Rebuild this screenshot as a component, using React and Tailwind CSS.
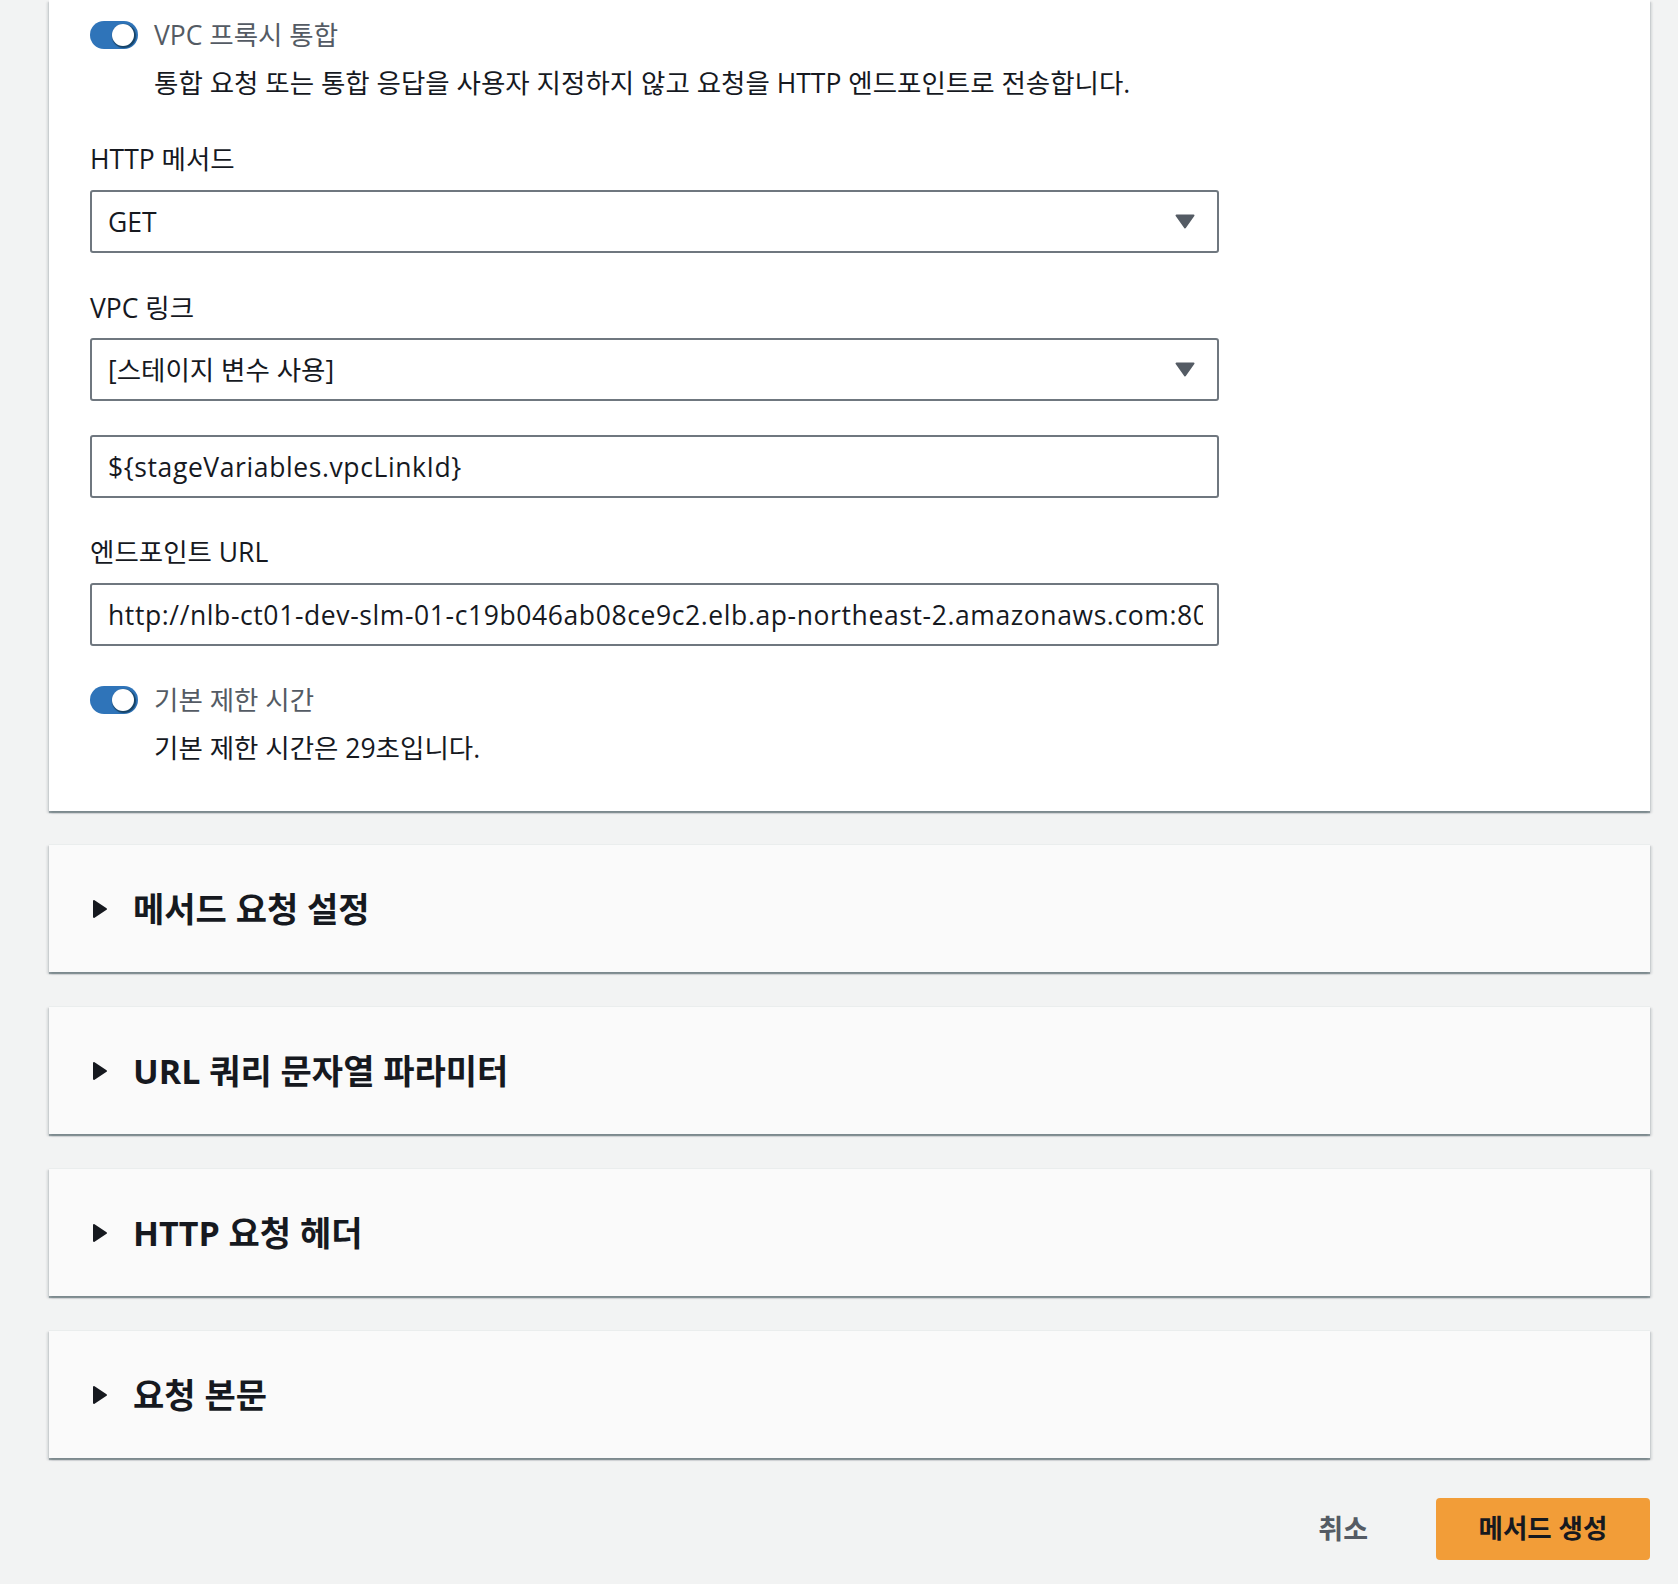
const font = { fontFamily: '"Open Sans", "Noto Sans CJK KR", sans-serif' };

function Toggle({ label, description }) {
  return (
    <div>
      <div className="flex items-center h-[32px]">
        <span className="relative inline-block w-[48px] h-[28px] rounded-full bg-[#2f74b9]">
          <span className="absolute right-[4px] top-[3px] w-[22px] h-[22px] rounded-full bg-white shadow-[1px_1px_1px_1px_rgba(0,28,36,0.55)]" />
        </span>
        <span className="ml-[16px] text-[26.5px] leading-[32px] text-[#545b64]">{label}</span>
      </div>
      <p className="mt-[14px] pl-[64px] text-[26.5px] leading-[36px] text-[#16191f]">{description}</p>
    </div>
  );
}

function Caret() {
  return (
    <svg width="20" height="15" viewBox="0 0 20 15" className="shrink-0">
      <path d="M1.5 1.5 H18.5 L10 13.5 Z" fill="#545b64" stroke="#545b64" strokeWidth="2" strokeLinejoin="round" />
    </svg>
  );
}

function Field({ children, select, wide }) {
  return (
    <div className={`flex items-center h-[63px] w-[1129px] border-2 border-[#6f777f] rounded-[3px] bg-white pl-[16px] overflow-hidden ${select ? "pr-[22px]" : "pr-[14px]"}`}>
      <span className={`flex-1 whitespace-nowrap overflow-hidden text-[26.5px] leading-[36px] text-[#16191f] ${wide ? "tracking-[0.6px]" : ""}`}>{children}</span>
      {select && <Caret />}
    </div>
  );
}

function Label({ children, className = "" }) {
  return <div className={`text-[26.5px] leading-[36px] text-[#16191f] ${className}`}>{children}</div>;
}

function Section({ title }) {
  return (
    <div className="h-[128px] bg-[#fafafa] border-t border-[#eaeded] shadow-[0_2px_1px_0_rgba(0,28,36,0.35),2px_2px_2px_0_rgba(0,28,36,0.12),-2px_2px_2px_0_rgba(0,28,36,0.12)] flex items-center pl-[43px]">
      <svg width="16" height="20" viewBox="0 0 16 20" className="shrink-0">
        <path d="M2 2 L14 10 L2 18 Z" fill="#16191f" stroke="#16191f" strokeWidth="2" strokeLinejoin="round" />
      </svg>
      <h2 className="ml-[25px] text-[34px] leading-[44px] font-bold text-[#16191f]">{title}</h2>
    </div>
  );
}

export default function App() {
  return (
    <div className="min-h-[1584px] bg-[#f2f3f3] pl-[49px] pr-[28px]" style={font}>
      {/* 통합 설정 카드 */}
      <div className="bg-white pt-[19px] pb-[45px] pl-[41px] shadow-[0_2px_1px_0_rgba(0,28,36,0.35),2px_2px_2px_0_rgba(0,28,36,0.12),-2px_2px_2px_0_rgba(0,28,36,0.12)]">
        <Toggle
          label="VPC 프록시 통합"
          description="통합 요청 또는 통합 응답을 사용자 지정하지 않고 요청을 HTTP 엔드포인트로 전송합니다."
        />

        <Label className="mt-[40px]">HTTP 메서드</Label>
        <div className="mt-[13px]">
          <Field select>GET</Field>
        </div>

        <Label className="mt-[37px]">VPC 링크</Label>
        <div className="mt-[12px]">
          <Field select>[스테이지 변수 사용]</Field>
        </div>
        <div className="mt-[34px]">
          <Field wide>{"${stageVariables.vpcLinkId}"}</Field>
        </div>

        <Label className="mt-[36px]">엔드포인트 URL</Label>
        <div className="mt-[13px]">
          <Field wide>http://nlb-ct01-dev-slm-01-c19b046ab08ce9c2.elb.ap-northeast-2.amazonaws.com:8080/{"{proxy}"}</Field>
        </div>

        <div className="mt-[38px]">
          <Toggle label="기본 제한 시간" description="기본 제한 시간은 29초입니다." />
        </div>
      </div>

      <div className="mt-[33px] flex flex-col gap-[34px]">
        <Section title="메서드 요청 설정" />
        <Section title="URL 쿼리 문자열 파라미터" />
        <Section title="HTTP 요청 헤더" />
        <Section title="요청 본문" />
      </div>

      <div className="mt-[40px] flex items-center justify-end">
        <button className="text-[27px] font-bold text-[#545b64] px-[20px] h-[62px] mr-[48px]">취소</button>
        <button className="w-[214px] h-[62px] rounded-[4px] bg-[#f29d38] text-[26.5px] font-bold text-[#16191f]">메서드 생성</button>
      </div>
    </div>
  );
}
